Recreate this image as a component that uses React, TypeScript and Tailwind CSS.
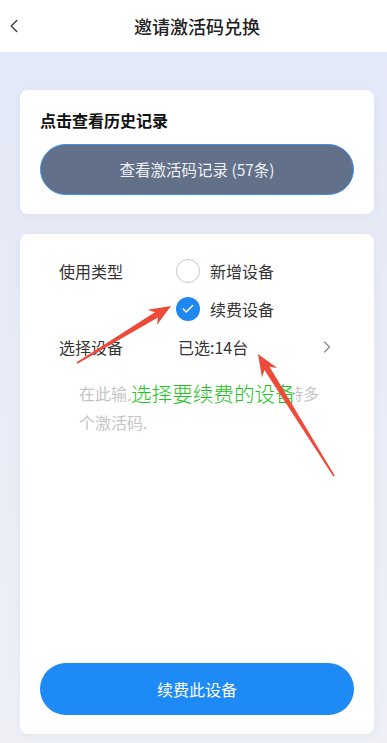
import { ChevronLeft, ChevronRight, Check } from "lucide-react";

type Pt = [number, number];

// tapered annotation arrow, tail -> tip
function arrowPoints(tail: Pt, tip: Pt) {
  const dx = tip[0] - tail[0];
  const dy = tip[1] - tail[1];
  const len = Math.hypot(dx, dy);
  const ux = dx / len;
  const uy = dy / len;
  const nx = -uy;
  const ny = ux;
  const at = (d: number, w: number): string =>
    `${tip[0] - ux * d + nx * w},${tip[1] - uy * d + ny * w}`;
  return [
    at(len, 0.8),
    at(17, 3),
    at(22, 9),
    at(0, 0),
    at(22, -9),
    at(17, -3),
    at(len, -0.8),
  ].join(" ");
}

function Radio({ checked, label }: { checked?: boolean; label: string }) {
  return (
    <div className="flex h-[38px] items-center gap-[10px]">
      {checked ? (
        <span className="flex h-[24px] w-[24px] items-center justify-center rounded-full bg-[#1e88f0]">
          <Check className="h-[14px] w-[14px] text-white" strokeWidth={2.6} />
        </span>
      ) : (
        <span className="h-[24px] w-[24px] rounded-full border-[1.5px] border-[#c8c8c8] bg-white" />
      )}
      <span className="text-[16px] text-[#333]">{label}</span>
    </div>
  );
}

export default function App() {
  return (
    <div
      className="relative flex h-[743px] w-[387px] flex-col overflow-hidden bg-gradient-to-b from-[#e3e8f7] to-[#eef0f6]"
      style={{ fontFamily: '"Noto Sans CJK SC", "Noto Sans", sans-serif' }}
    >
      {/* Header */}
      <div className="relative flex h-[52px] items-center justify-center bg-white pl-[7px]">
        <ChevronLeft className="absolute left-[3px] h-[22px] w-[22px] text-[#444]" strokeWidth={1.6} />
        <span className="text-[18px] font-medium text-[#222]">邀请激活码兑换</span>
      </div>

      <div className="flex flex-col gap-[20px] pl-[20px] pr-[13px] pt-[38px]">
        {/* History card */}
        <div className="rounded-[8px] bg-white px-[20px] pb-[19px] pt-[19px] shadow-[0_2px_8px_rgba(120,130,170,0.08)]">
          <div className="h-[22px] text-[16px] font-bold leading-[22px] text-[#111]">点击查看历史记录</div>
          <button className="mt-[13px] flex h-[51px] w-full items-center justify-center rounded-full border border-[#3f8fee] bg-[#63708a] text-[15.5px] text-[#eef0f4]">
            查看激活码记录 (57条)
          </button>
        </div>

        {/* Form card */}
        <div className="flex h-[500px] flex-col rounded-[8px] bg-white px-[20px] pb-[19px] pt-[18px] shadow-[0_2px_8px_rgba(120,130,170,0.08)]">
          <div className="flex pl-[19px]">
            <div className="flex h-[38px] w-[117px] items-center text-[16px] text-[#333]">使用类型</div>
            <div className="flex flex-col">
              <Radio label="新增设备" />
              <Radio checked label="续费设备" />
            </div>
          </div>
          <div className="flex h-[38px] items-center pl-[19px] pr-[17px]">
            <div className="w-[119px] text-[16px] text-[#333]">选择设备</div>
            <div className="flex-1 text-[16px] text-[#333]">已选:14台</div>
            <ChevronRight className="h-[20px] w-[20px] text-[#8a8a8a]" strokeWidth={1.5} />
          </div>
          <div className="mt-[13px] pl-[39px] pr-[24px] text-[16px] leading-[29px] text-[#c4c4c4]">
            在此输入激活码，每行一个支持多个激活码.
          </div>
          <div className="flex-1" />
          <button className="flex h-[52px] w-full items-center justify-center rounded-full bg-[#1d8af6] text-[16px] text-white">
            续费此设备
          </button>
        </div>
      </div>

      {/* annotations */}
      <div className="absolute left-[131px] top-[379px] bg-white/90 text-[20.6px] font-light leading-[28px] text-[#22c322]">
        选择要续费的设备
      </div>
      <svg className="pointer-events-none absolute left-0 top-0" width="387" height="743">
        <polygon points={arrowPoints([77, 363], [171, 306])} fill="#ee4a3a" />
        <polygon points={arrowPoints([334, 476], [258, 354])} fill="#ee4a3a" />
      </svg>
    </div>
  );
}
